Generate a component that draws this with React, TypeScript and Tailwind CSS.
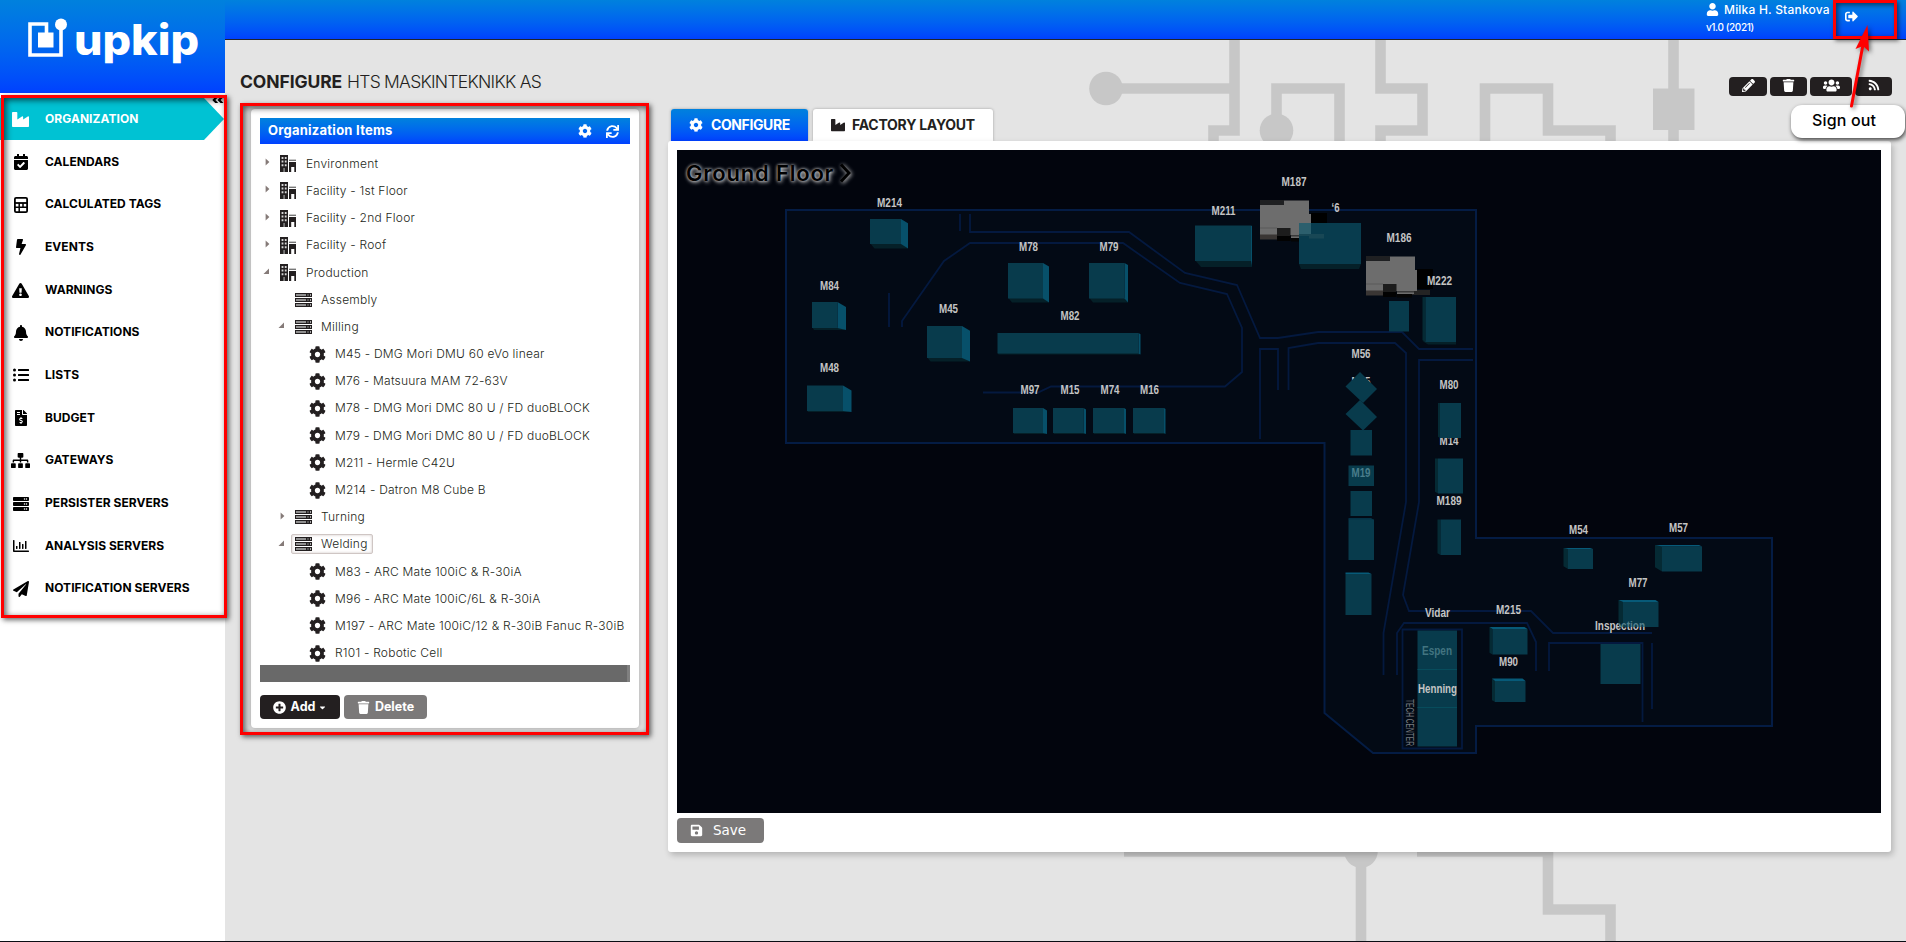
import React from "react";
import {
  FaIndustry, FaCalendarCheck, FaBolt, FaExclamationTriangle, FaBell, FaListUl, FaFileInvoiceDollar,
  FaSitemap, FaServer, FaRegChartBar, FaPaperPlane, FaAngleDoubleLeft, FaCog, FaSync, FaPlusCircle,
  FaTrash, FaPencilAlt, FaUsers, FaRss, FaUser, FaSignOutAlt, FaSave, FaCaretDown,
} from "react-icons/fa";

function CalculatorIcon() {
  return (
    <svg width="14" height="16" viewBox="0 0 14 16" fill="none" stroke="currentColor">
      <rect x="0.9" y="0.9" width="12.2" height="14.2" rx="1.2" strokeWidth="1.8" />
      <path d="M1 6H13" strokeWidth="1.8" />
      <path d="M1 10.2H13M5.2 6V15M9 6V10" strokeWidth="1.5" />
    </svg>
  );
}

function BuildingIcon() {
  return (
    <svg width="17" height="17" viewBox="0 0 17 17">
      <path d="M0 0H8V17H0Z" fill="#231f20" />
      <path d="M1.6 2H3.4V4H1.6ZM4.8 2H6.6V4H4.8ZM1.6 5.6H3.4V7.6H1.6ZM4.8 5.6H6.6V7.6H4.8ZM1.6 9.2H3.4V11.2H1.6ZM4.8 9.2H6.6V11.2H4.8Z" fill="#d6d6d6" />
      <path d="M3.2 13H5V17H3.2Z" fill="#777" />
      <path d="M9 4.6H16V6H9Z" fill="#777" />
      <path d="M9 7H16V17H14.3V12H11.2V17H9Z" fill="#231f20" />
    </svg>
  );
}

function RackIcon() {
  return (
    <svg width="17" height="14" viewBox="0 0 17 14">
      {[0, 5, 10].map((y) => (
        <g key={y}>
          <rect x="0" y={y} width="17" height="4" fill="#231f20" />
          <rect x="1" y={y + 1} width="10" height="2" fill="#8f8f8f" />
          <rect x="12.4" y={y + 1} width="1.2" height="2" fill="#777" />
          <rect x="15" y={y + 1} width="1" height="2" fill="#aaa" />
        </g>
      ))}
    </svg>
  );
}

function Logo() {
  return (
    <svg width="225" height="93" viewBox="0 0 225 93" fill="none">
      <path d="M61 28V55H30V24H46.5V34" stroke="#fff" strokeWidth="3.6" />
      <circle cx="61" cy="24.5" r="6" fill="#fff" />
      <path d="M38 32.5H53.5V47.5H38Z" fill="#fff" />
      <text x="74" y="55" fill="#fff" fontFamily="Inter, sans-serif" fontWeight="800" fontSize="42" textLength="125" lengthAdjust="spacingAndGlyphs">upkip</text>
    </svg>
  );
}

const NAV = [
  { label: "ORGANIZATION", icon: <FaIndustry size={17} /> },
  { label: "CALENDARS", icon: <FaCalendarCheck size={16} /> },
  { label: "CALCULATED TAGS", icon: <CalculatorIcon /> },
  { label: "EVENTS", icon: <FaBolt size={16} /> },
  { label: "WARNINGS", icon: <FaExclamationTriangle size={17} /> },
  { label: "NOTIFICATIONS", icon: <FaBell size={16} /> },
  { label: "LISTS", icon: <FaListUl size={16} /> },
  { label: "BUDGET", icon: <FaFileInvoiceDollar size={16} /> },
  { label: "GATEWAYS", icon: <FaSitemap size={19} /> },
  { label: "PERSISTER SERVERS", icon: <FaServer size={16} /> },
  { label: "ANALYSIS SERVERS", icon: <FaRegChartBar size={16} /> },
  { label: "NOTIFICATION SERVERS", icon: <FaPaperPlane size={16} /> },
];

function Sidebar() {
  return (
    <aside className="flex w-[225px] shrink-0 flex-col bg-white">
      <div className="h-[93px] bg-linear-to-b from-[#0081dd] to-[#0040ff]">
        <Logo />
      </div>
      <nav className="relative flex flex-col pt-[5px]">
        {NAV.map((item, i) => (
          <div key={item.label} className={i === 0 ? "relative flex h-[42.7px] items-center text-white" : "relative flex h-[42.7px] items-center text-black"}>
            {i === 0 && (
              <svg className="absolute left-0 top-0" width="225" height="42" viewBox="0 0 225 42">
                <path d="M0 0H204L224 21L204 42H0Z" fill="#00c2d3" />
              </svg>
            )}
            <span className="relative flex w-[41px] justify-center">{item.icon}</span>
            <span className="relative -mt-px pl-1 text-[12px] font-bold tracking-[0.05px]">{item.label}</span>
          </div>
        ))}
        <span className="absolute right-0 top-0 flex h-[10px] items-end overflow-hidden text-black">
          <FaAngleDoubleLeft size={14} className="-mb-1" />
        </span>
      </nav>
    </aside>
  );
}

type Node = { label: string; level: 0 | 1 | 2; state?: "open" | "closed"; selected?: boolean };
const TREE: Node[] = [
  { label: "Environment", level: 0, state: "closed" },
  { label: "Facility - 1st Floor", level: 0, state: "closed" },
  { label: "Facility - 2nd Floor", level: 0, state: "closed" },
  { label: "Facility - Roof", level: 0, state: "closed" },
  { label: "Production", level: 0, state: "open" },
  { label: "Assembly", level: 1 },
  { label: "Milling", level: 1, state: "open" },
  { label: "M45 - DMG Mori DMU 60 eVo linear", level: 2 },
  { label: "M76 - Matsuura MAM 72-63V", level: 2 },
  { label: "M78 - DMG Mori DMC 80 U / FD duoBLOCK", level: 2 },
  { label: "M79 - DMG Mori DMC 80 U / FD duoBLOCK", level: 2 },
  { label: "M211 - Hermle C42U", level: 2 },
  { label: "M214 - Datron M8 Cube B", level: 2 },
  { label: "Turning", level: 1, state: "closed" },
  { label: "Welding", level: 1, state: "open", selected: true },
  { label: "M83 - ARC Mate 100iC & R-30iA", level: 2 },
  { label: "M96 - ARC Mate 100iC/6L & R-30iA", level: 2 },
  { label: "M197 - ARC Mate 100iC/12 & R-30iB Fanuc R-30iB", level: 2 },
  { label: "R101 - Robotic Cell", level: 2 },
];
const INDENT = ["pl-[3px]", "pl-[18px]", "pl-[32px]"];

function TreeRow({ node }: { node: Node }) {
  return (
    <div className={`flex h-[27.2px] shrink-0 items-center ${INDENT[node.level]}`}>
      <span className="flex w-[14px] pb-[3px]">
        {node.state === "closed" && <svg width="8" height="8" viewBox="0 0 8 8"><path d="M2.6 0.5V7.5L6.4 4Z" fill="#857a78" /></svg>}
        {node.state === "open" && <svg width="8" height="8" viewBox="0 0 8 8"><path d="M6 1.5V7H0.5Z" fill="#857a78" /></svg>}
      </span>
      <span className={node.selected ? "-ml-px flex h-5 items-center rounded-[2px] border border-[#cfc6c4] bg-white pl-[3px] pr-[4px] shadow-[inset_0_0_3px_#cfc6c4]" : "flex h-5 items-center pl-[3px]"}>
        <span className="flex w-[26px]">
          {node.level === 0 ? <BuildingIcon /> : node.level === 1 ? <RackIcon /> : <FaCog size={17} className="text-[#231f20]" />}
        </span>
        <span className="whitespace-nowrap text-[12px] font-light tracking-[0.22px] text-[#231f20]">{node.label}</span>
      </span>
    </div>
  );
}

function OrganizationPanel() {
  return (
    <section className="flex h-[619px] w-[388px] flex-col rounded-[4px] bg-white px-[9px] pt-[9px] shadow-[0_0_4px_rgba(0,0,0,0.3)]">
      <header className="flex h-[26px] shrink-0 items-center bg-linear-to-b from-[#0081dd] to-[#0040ff] pl-2 pr-[11px] text-white">
        <h2 className="flex-1 text-[13px] font-bold tracking-[0.25px]">Organization Items</h2>
        <FaCog size={14} />
        <FaSync size={13} className="ml-[14px]" />
      </header>
      <div className="flex h-[521px] shrink-0 flex-col pt-[6.2px]">
        {TREE.map((n) => <TreeRow key={n.label} node={n} />)}
      </div>
      <div className="relative h-[17px] shrink-0 border-r-[3px] border-[#808080] bg-[#696969]" />
      <div className="mt-[13px] flex gap-1 text-[12.5px] font-bold text-white">
        <button className="flex h-6 w-20 items-center justify-center rounded-[4px] bg-[#231f20]">
          <FaPlusCircle size={13} className="mr-[5px]" />Add<FaCaretDown size={9} className="ml-[3px]" />
        </button>
        <button className="flex h-6 w-[83px] items-center justify-center rounded-[4px] bg-[#7b7979]">
          <FaTrash size={13} className="mr-[5px]" />Delete
        </button>
      </div>
    </section>
  );
}

type Block = { x: number; y: number; w: number; h: number; side?: number; bottom?: number; left?: number; top?: number };
const BLOCKS: Block[] = [
  { x: 870, y: 219, w: 31, h: 25, side: 7, bottom: 4.5 },
  { x: 812, y: 302, w: 25.5, h: 26, side: 8.5, bottom: 2 },
  { x: 807, y: 385.5, w: 36, h: 25.5, side: 8.5, bottom: 1 },
  { x: 927, y: 326, w: 35, h: 32, side: 8, bottom: 3.5 },
  { x: 1008, y: 263, w: 35, h: 35.5, side: 6, bottom: 4 },
  { x: 1089, y: 263, w: 35.5, h: 35.5, side: 3.5, bottom: 4 },
  { x: 997.5, y: 333, w: 141, h: 20.5, side: 2, bottom: 1 },
  { x: 1013, y: 408, w: 30, h: 25, side: 4, bottom: 1 },
  { x: 1053, y: 408, w: 30.5, h: 25, side: 2.5, bottom: 1 },
  { x: 1093, y: 408, w: 31, h: 25, side: 2, bottom: 1 },
  { x: 1133, y: 408, w: 31, h: 25, side: 1.5, bottom: 1 },
  { x: 1195, y: 225.5, w: 56, h: 35.5, side: 1, bottom: 6 },
  { x: 1389, y: 301, w: 20, h: 30.5 },
  { x: 1425.5, y: 297, w: 30.5, h: 45, left: 3, bottom: 2.5 },
  { x: 1350.5, y: 430, w: 21.5, h: 25.5 },
  { x: 1348.5, y: 465.5, w: 25.5, h: 20.5 },
  { x: 1350.5, y: 491, w: 21.5, h: 25 },
  { x: 1348.5, y: 519.5, w: 25.5, h: 40.5, top: 1 },
  { x: 1345.5, y: 574, w: 26, h: 41, top: 1.5 },
  { x: 1440, y: 403, w: 21, h: 35, left: 2 },
  { x: 1438, y: 458.5, w: 25, h: 35, left: 3 },
  { x: 1440.5, y: 519.5, w: 20.5, h: 35.5, left: 3 },
  { x: 1568, y: 549, w: 25, h: 20, left: 4.5, top: 1 },
  { x: 1662, y: 546.5, w: 40, h: 25, left: 7, top: 1.5 },
  { x: 1623, y: 602, w: 35.5, h: 25, left: 4.5, top: 2 },
  { x: 1600.5, y: 644, w: 40, h: 40 },
  { x: 1492.5, y: 629, w: 35, h: 25.5, left: 3, top: 2 },
  { x: 1495, y: 681, w: 30.5, h: 21, left: 3, top: 2.5 },
  { x: 1417.5, y: 630.5, w: 39.5, h: 116 },
];

function MachineBlock({ b }: { b: Block }) {
  const { x, y, w, h, side = 0, bottom = 0, left = 0, top = 0 } = b;
  const r = x + w;
  const d = y + h;
  return (
    <g>
      {bottom > 0 && <path d={`M${x - left} ${d - 1}L${x + bottom} ${d + bottom}H${r + side}L${r} ${d - 1}Z`} fill="#052028" />}
      {side > 0 && <path d={`M${r} ${y}L${r + side} ${y + side * 0.6}V${d + bottom}L${r} ${d}Z`} fill="#07506a" />}
      {left > 0 && <path d={`M${x} ${y}L${x - left} ${y - top}V${d - left * 0.6}L${x} ${d}Z`} fill="#052a34" />}
      {top > 0 && <path d={`M${x} ${y}L${x - left} ${y - top}H${r - 3}L${r} ${y}Z`} fill="#075a78" />}
      <rect x={x} y={y} width={w} height={h} fill="#083b4c" />
    </g>
  );
}

const LABELS: [string, number, number, number][] = [
  ["M214", 889.5, 203, 25], ["M84", 829.5, 285.5, 19], ["M48", 829.5, 368, 19], ["M45", 948.5, 309, 19],
  ["M78", 1028.5, 247, 19], ["M79", 1109, 247, 19], ["M82", 1070, 316, 19], ["M97", 1030, 390, 19],
  ["M15", 1070, 390, 19], ["M74", 1110, 390, 19], ["M16", 1149.5, 390, 19], ["M211", 1223.5, 211, 24],
  ["M187", 1294, 182, 25], ["‘6", 1335.5, 208, 8], ["M186", 1399, 237.5, 25], ["M222", 1439.5, 280.5, 25],
  ["M56", 1361, 354, 19], ["M80", 1449, 385, 19], ["M189", 1449, 501, 25], ["Vidar", 1437.5, 612.5, 25],
  ["M215", 1508.5, 610, 25], ["M90", 1508.5, 662, 19], ["M54", 1578.5, 530, 19], ["M57", 1678.5, 527.5, 19],
  ["M77", 1638, 582.5, 19], ["Henning", 1437.5, 689, 39],
];

function MapLabel({ t, x, y, w, fill = "#c4c4c4" }: { t: string; x: number; y: number; w: number; fill?: string }) {
  return (
    <text x={x - w / 2} y={y + 4} textLength={w} lengthAdjust="spacingAndGlyphs" fontFamily="'Liberation Sans', Arial, sans-serif" fontWeight="700" fontSize="13.5" fill={fill}>{t}</text>
  );
}

function Cnc({ dx, dy }: { dx: number; dy: number }) {
  return (
    <g transform={`translate(${dx} ${dy})`}>
      <path d="M51 13H67V33H51Z" fill="#000" />
      <path d="M51 34H64V39H45V35Z" fill="#242424" />
      <path d="M31 38H46V41.5H31Z" fill="#050505" />
      <path d="M0 0H24V5H0Z" fill="#1f2022" />
      <path d="M24 0.5H49V14H51V35H48V38H31V35H0V5H24Z" fill="#6d6d6d" />
      <path d="M0 27.5H17V28.5H0Z" fill="#5a5a5a" />
      <path d="M0 34.5H17V39.5H0Z" fill="#3a3634" />
      <path d="M17 28H30.5V36H17Z" fill="#1c1c1c" />
      <path d="M17 36H30.5V41H17Z" fill="#020202" />
      <path d="M31 35H48V36.5H31Z" fill="#3a3a3a" />
    </g>
  );
}

function FloorMap() {
  return (
    <svg className="block" width="1204" height="663" viewBox="677 150 1204 663">
      <rect x="677" y="150" width="1204" height="663" fill="#02050d" />
      <path d="M786 210H1476V538H1772V726H1476V753H1373L1324.5 713V443H786Z" fill="#030a15" stroke="#041c44" strokeWidth="2" />
      <g fill="none" stroke="#04193f" strokeWidth="1.8">
        <path d="M960 214V231M970 214V232H1129L1185 273L1237 285L1260 338H1278L1318 332H1402L1419 349H1473" />
        <path d="M902 327V321L944 261L970 243H1123L1180 283L1227 294L1242 328V372L1225 386.5H1051L1038 392.5H983" />
        <path d="M889 293V327M1260 439V349H1278V390M1288.5 390V348L1318 343H1395L1406 353V502L1383.5 633V675" />
        <path d="M1473 360H1419V502L1403 595L1409 611H1531L1553 633H1652M1397 675V633L1404 623H1527L1536 642V671" />
        <path d="M1549 671V643H1642.5V722M1652 643V709M1402.5 629.5H1462V748.5H1402.5Z" />
      </g>
      <MapLabel t="M75" x={1361} y={382} w={19} />
      <MapLabel t="M14" x={1449} y={441} w={19} />
      <MapLabel t="Inspection" x={1620} y={626} w={50} />
      <Cnc dx={1260} dy={200} />
      <Cnc dx={1366} dy={256} />
      <path d="M1299 264L1301 269H1359L1361 264Z" fill="#052028" />
      <rect x="1299" y="223" width="62" height="41" fill="#083c4e" />
      <path d="M1299 223H1311V234H1299Z" fill="#2c5f6d" />
      <path d="M1299 234H1324V238.5H1309V236H1299Z" fill="#184755" />
      {BLOCKS.map((b) => <MachineBlock key={`${b.x}-${b.y}`} b={b} />)}
      <path d="M1360 372L1377 389L1363 403L1345.5 386.5Z" fill="#083b4c" />
      <path d="M1360 400L1377 417L1363 430.5L1345.5 414Z" fill="#083b4c" />
      <path d="M1417.5 669.5H1457M1417.5 707.5H1457" stroke="#074c5c" strokeWidth="1" />
      {LABELS.map(([t, x, y, w]) => <MapLabel key={t} t={t} x={x} y={y} w={w} />)}
      <MapLabel t="M19" x={1361} y={473} w={19} fill="#4a7d8b" />
      <MapLabel t="Espen" x={1437} y={651} w={30} fill="#427480" />
      <clipPath id="overM77"><rect x="1619" y="600" width="39.5" height="27" /></clipPath>
      <g clipPath="url(#overM77)"><MapLabel t="Inspection" x={1620} y={626} w={50} fill="#54808c" /></g>
      <text transform="translate(1406 699) rotate(90)" textLength="47" lengthAdjust="spacingAndGlyphs" fontFamily="'Liberation Sans', Arial, sans-serif" fontSize="10.5" fill="#777b80">TECH CENTER</text>
    </svg>
  );
}

function Backdrop() {
  return (
    <svg className="absolute left-0 top-0" width="1681" height="942" viewBox="225 0 1681 942">
      <rect x="225" width="1681" height="942" fill="#e4e4e4" />
      <g fill="none" stroke="#c7c7c7" strokeWidth="10.6">
        <path d="M1234.5 40V130.5H1213.5V150M1234.5 88.5H1106M1276.5 130V88.5H1339.5V150" />
        <path d="M1380.5 40V88.5H1422.5V130.5H1380.5V150M1485 150V88.5H1548V130.5H1610.5V150M1673.5 40V150" />
        <path d="M1124 851.5H1361V941M1417 851.5H1548V909.5H1610.5V941" />
      </g>
      <g fill="#c7c7c7">
        <circle cx="1106" cy="88.5" r="16.8" />
        <circle cx="1276.5" cy="130.5" r="16.8" />
        <circle cx="1361" cy="851" r="16.8" />
        <rect x="1653" y="88.5" width="41.5" height="41.5" />
      </g>
    </svg>
  );
}

function TopBar() {
  return (
    <header className="relative flex h-10 border-b border-[#20242c] bg-linear-to-b from-[#0081dd] to-[#0040ff] pl-[1481px] text-white">
      <div className="flex w-[139px] flex-col">
        <div className="flex h-[19px] items-center whitespace-nowrap text-[12px] font-medium tracking-[0.2px]">
          <FaUser size={13} className="mr-[5px]" />Milka H. Stankova
        </div>
        <div className="flex h-[17px] items-center whitespace-nowrap text-[10px] font-medium tracking-[-0.4px]">v1.0 (2021)</div>
      </div>
      <FaSignOutAlt size={13} className="mt-[10px]" />
    </header>
  );
}

function Toolbar() {
  return (
    <div className="flex gap-[3px] text-white">
      <button className="flex h-[19px] w-[38px] items-center justify-center rounded-[4px] bg-[#231f20] pb-[3px]"><FaPencilAlt size={13} /></button>
      <button className="flex h-[19px] w-[37px] items-center justify-center rounded-[4px] bg-[#231f20] pb-[3px]"><FaTrash size={13} /></button>
      <button className="flex h-[19px] w-[42px] items-center justify-center rounded-[4px] bg-[#231f20] pb-[3px]"><FaUsers size={17} /></button>
      <button className="flex h-[19px] w-[37px] items-center justify-center rounded-[4px] bg-[#231f20] pb-[3px]"><FaRss size={12} /></button>
    </div>
  );
}

function LayoutPanel() {
  return (
    <section className="flex w-[1223px] flex-col">
      <div className="flex h-8 gap-[5px] pl-[3px] text-[14px] font-bold">
        <div className="flex w-[137px] items-center rounded-t-[3px] bg-linear-to-b from-[#0081dd] to-[#0040ff] pl-[18px] text-white shadow-[0_0_3px_rgba(0,0,0,0.3)]">
          <FaCog size={14} className="mr-2" /><span className="-mt-px tracking-[-0.4px]">CONFIGURE</span>
        </div>
        <div className="flex w-[180px] items-center rounded-t-[3px] bg-white pl-[18px] text-[#231f20] shadow-[0_0_3px_rgba(0,0,0,0.3)]">
          <FaIndustry size={14} className="mr-[7px]" /><span className="-mt-px tracking-[-0.25px]">FACTORY LAYOUT</span>
        </div>
      </div>
      <div className="relative h-[711px] rounded-[3px] bg-white px-[9px] pt-[9px] shadow-[2px_3px_6px_rgba(0,0,0,0.22)]">
        <FloorMap />
        <div className="absolute left-[18px] top-[19px] flex items-center text-[22px] font-semibold leading-[26px] tracking-[0.8px] text-black [text-shadow:1px_1px_4px_#ddd,0_0_3px_#bbb]">
          <span className="whitespace-nowrap">Ground Floor</span>
          <svg className="ml-[5px] drop-shadow-[1px_1px_2px_#ddd]" width="12" height="20" viewBox="0 0 12 20" fill="none" stroke="#000" strokeWidth="3"><path d="M2 1.5L10 10L2 18.5" /></svg>
        </div>
        <button className="mt-[5px] flex h-[25px] w-[87px] items-center rounded-[4px] bg-[#7b7979] pl-[13px] font-['DejaVu_Sans'] text-[13.5px] text-white">
          <FaSave size={13} className="mr-[10px]" />Save
        </button>
      </div>
    </section>
  );
}

function Annotations() {
  return (
    <>
      <div className="absolute left-px top-[95px] h-[523px] w-[226px] border-[3px] border-[#f00] shadow-[2px_2px_5px_rgba(0,0,0,0.6),inset_2px_2px_6px_rgba(0,0,0,0.65)]" />
      <div className="absolute left-[240px] top-[103px] h-[632px] w-[409px] border-[3px] border-[#f00] shadow-[2px_2px_5px_rgba(0,0,0,0.6),inset_2px_2px_6px_rgba(0,0,0,0.65)]" />
      <div className="absolute left-[1833px] top-0 h-[39px] w-16 border-[3px] border-[#f00] shadow-[2px_2px_4px_rgba(0,0,0,0.5),inset_2px_2px_5px_rgba(0,0,0,0.55)]" />
      <div className="absolute left-[1791px] top-[105px] flex h-[33px] w-[114px] items-center rounded-[11px] bg-white pb-[3px] pl-[21px] text-[16px] font-medium tracking-[0.15px] text-black shadow-[1px_2px_4px_rgba(0,0,0,0.7)]">Sign out</div>
      <svg className="absolute left-[1840px] top-[20px] drop-shadow-[2px_2px_2px_rgba(0,0,0,0.5)]" width="40" height="92" viewBox="1840 20 40 92">
        <path d="M1851.5 106L1863.5 42" stroke="#f00" strokeWidth="3" strokeLinecap="round" />
        <path d="M1867.5 25L1869 51.5L1863 46L1855.5 49Z" fill="#f00" />
      </svg>
    </>
  );
}

export default function App() {
  return (
    <div className="relative flex h-[942px] w-[1906px] overflow-hidden border-b border-[#0b0d14] font-[Inter,sans-serif]">
      <Sidebar />
      <main className="relative flex w-[1681px] flex-col">
        <Backdrop />
        <TopBar />
        <div className="relative flex h-[69px] items-start justify-between pl-[15px] pr-[14px]">
          <h1 className="pt-[30px] text-[17.5px] leading-6 text-[#231f20]">
            <span className="font-bold tracking-[-0.1px]">CONFIGURE</span>{" "}
            <span className="font-light tracking-[-0.75px]">HTS MASKINTEKNIKK AS</span>
          </h1>
          <div className="pt-[37px]"><Toolbar /></div>
        </div>
        <div className="relative flex items-start gap-[29px] pl-[26px]">
          <OrganizationPanel />
          <LayoutPanel />
        </div>
      </main>
      <Annotations />
    </div>
  );
}
